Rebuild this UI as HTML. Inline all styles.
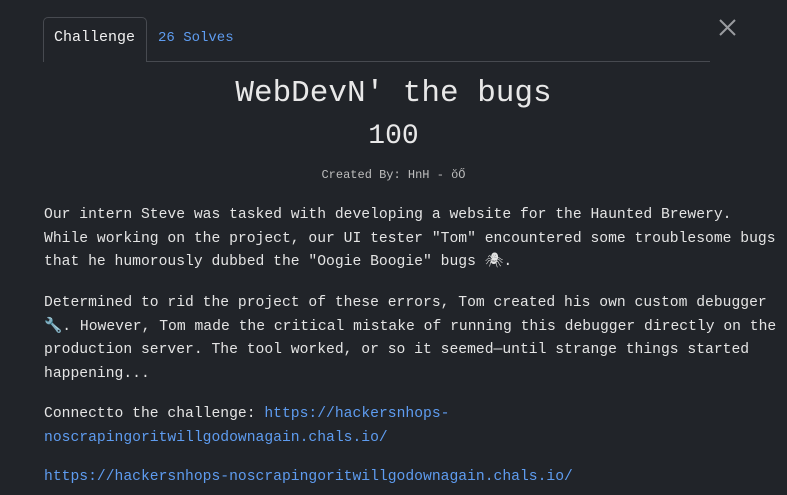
<!DOCTYPE html>
<html><head><style>
body{margin:0;width:787px;height:495px;background:#212429;overflow:hidden;font-family:"Liberation Mono",monospace;color:#e4e4e4;position:relative}
.tab{position:absolute;left:43px;top:17px;width:102px;height:44px;border:1px solid #474a50;border-bottom:none;border-radius:5px 5px 0 0;background:#212429}
.line{position:absolute;left:43px;top:61px;width:667px;height:1px;background:#474a50}
.t{position:absolute;white-space:nowrap}
a{color:#5e9cf0;text-decoration:none}
</style></head><body>
<div class="line"></div>
<div class="tab"></div>
<div class="t" style="left:54px;top:29px;font-size:15px;color:#f0f0f0">Challenge</div>
<div class="t" style="left:158px;top:30px;font-size:14px;color:#5e9cf0">26 Solves</div>
<svg style="position:absolute;left:719px;top:19px" width="17" height="17"><path d="M1 1L16 16M16 1L1 16" stroke="#9a9ca0" stroke-width="2"/></svg>
<div class="t" style="left:0;width:787px;text-align:center;top:76px;font-size:31px;color:#e8e8e8">WebDevN' the bugs</div>
<div class="t" style="left:0;width:787px;text-align:center;top:121px;font-size:28px;color:#e8e8e8">100</div>
<div class="t" style="left:0;width:787px;text-align:center;top:168px;font-size:12px;color:#bdbdbd">Created By: HnH - ŏŐ</div>
<div class="t" style="left:44px;top:204px;font-size:14.7px;line-height:23.5px">Our intern Steve was tasked with developing a website for the Haunted Brewery.<br>While working on the project, our UI tester "Tom" encountered some troublesome bugs<br>that he humorously dubbed the "Oogie Boogie" bugs 🕷.</div>
<div class="t" style="left:44px;top:292px;font-size:14.7px;line-height:23.5px">Determined to rid the project of these errors, Tom created his own custom debugger<br>🔧. However, Tom made the critical mistake of running this debugger directly on the<br>production server. The tool worked, or so it seemed—until strange things started<br>happening...</div>
<div class="t" style="left:44px;top:403px;font-size:14.7px;line-height:23.5px">Connectto the challenge: <a>https://hackersnhops-</a><br><a>noscrapingoritwillgodownagain.chals.io/</a></div>
<div class="t" style="left:44px;top:466px;font-size:14.7px;line-height:23.5px"><a>https://hackersnhops-noscrapingoritwillgodownagain.chals.io/</a></div>
</body></html>
